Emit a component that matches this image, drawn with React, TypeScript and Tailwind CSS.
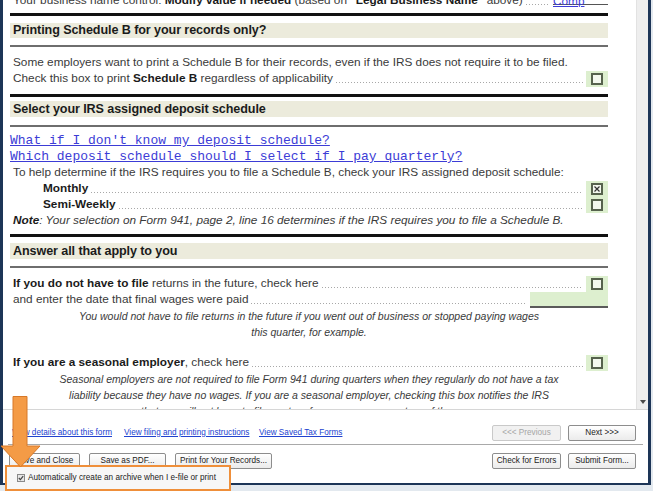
import React from 'react';

const dots = 'h-px flex-1 bg-[linear-gradient(to_right,#a8a8a8_1px,transparent_1px)] bg-[length:3px_1px]';

function Box({ checked }: { checked?: boolean }) {
  return (
    <span className="flex h-[12px] w-[12px] items-center justify-center border-2 border-[#56624d] bg-[#f3f8ee]">
      {checked && (
        <svg width="6" height="6" viewBox="0 0 6 6">
          <path d="M0.5 0.5 L5.5 5.5 M5.5 0.5 L0.5 5.5" stroke="#333" strokeWidth="1.2" />
        </svg>
      )}
    </span>
  );
}

function Cell({ checked }: { checked?: boolean }) {
  return (
    <div className="flex h-[16px] w-[22px] items-center justify-center bg-[#ddefcf]">
      <Box checked={checked} />
    </div>
  );
}

function LeaderRow({ children, right, indent }: { children: React.ReactNode; right: React.ReactNode; indent?: boolean }) {
  return (
    <div className="flex h-[16px] items-center">
      <span className={`whitespace-nowrap ${indent ? 'pl-[33px]' : 'pl-[3px]'}`}>{children}</span>
      <span className={`mx-[3px] mt-[7px] ${dots}`} />
      {right}
    </div>
  );
}

function Header({ title }: { title: string }) {
  return (
    <div className="flex h-full items-center bg-[#ecebdc] pl-[3px] text-[12.6px] font-bold tracking-[-0.1px] text-[#1b1b1b]">
      {title}
    </div>
  );
}

function Btn({ label, w, disabled }: { label: string; w: string; disabled?: boolean }) {
  return (
    <button
      className={`flex h-[16px] items-center justify-center whitespace-nowrap rounded-[2px] border text-[8.2px] ${w} ${
        disabled
          ? 'border-[#c9c9c9] bg-[#f1f1f1] text-[#a6a6a6]'
          : 'border-[#8d8d8d] bg-gradient-to-b from-white to-[#ebebeb] text-[#222]'
      }`}
    >
      {label}
    </button>
  );
}

export default function App() {
  return (
    <div className="relative h-[491px] w-[653px] overflow-hidden bg-[#e3e9ef] font-['Liberation_Sans',Arial,sans-serif]">
      <div className="flex h-[485px] w-[651px] flex-col border-x-[3px] border-b-[2px] border-[#1d3557] bg-white">
        {/* Scrolling form pane */}
        <div className="flex h-[410px] border-b border-[#d6d6d6]">
          <div className="flex-1 overflow-hidden pl-[7px] pr-[28px] text-[11.8px] text-[#3a3a3a]">
            <div className="h-[13px] overflow-hidden">
              <div className="-mt-[7px] flex h-[16px] items-center">
                <span className="whitespace-nowrap pl-[3px]">
                  Your business name control: <b className="text-[#1b1b1b]">Modify value if needed</b> (based on{' '}
                  <b className="text-[#1b1b1b]">"Legal Business Name"</b> above)
                </span>
                <span className={`mx-[3px] mt-[7px] ${dots}`} />
                <span className="h-[12px] w-[55px] self-start border-b border-[#555]">
                  <span className="text-[#3c3cd6] underline">Comp</span>
                </span>
              </div>
            </div>
            <div className="h-[3px] bg-[#111]" />
            <div className="mt-[7px] h-[15px]">
              <Header title="Printing Schedule B for your records only?" />
            </div>
            <div className="mt-[7px] h-[2px] bg-[#6e6e6e]" />

            <div className="mt-[8px] flex h-[16px] items-center whitespace-nowrap pl-[3px]">
              Some employers want to print a Schedule B for their records, even if the IRS does not require it to be filed.
            </div>
            <LeaderRow right={<Cell />}>
              Check this box to print <b className="text-[#1b1b1b]">Schedule B</b> regardless of applicability
            </LeaderRow>
            <div className="mt-[7px] h-[3px] bg-[#111]" />
            <div className="mt-[4px] h-[16px]">
              <Header title="Select your IRS assigned deposit schedule" />
            </div>
            <div className="mt-[8px] h-[2px] bg-[#6e6e6e]" />

            <div className="mt-[6px] font-['Liberation_Mono','Courier_New',monospace] text-[13px] leading-[16px] text-[#3c3cd6]">
              <div className="underline">What if I don't know my deposit schedule?</div>
              <div className="underline">Which deposit schedule should I select if I pay quarterly?</div>
            </div>
            <div className="flex h-[16px] items-center whitespace-nowrap pl-[3px]">
              To help determine if the IRS requires you to file a Schedule B, check your IRS assigned deposit schedule:
            </div>
            <LeaderRow indent right={<Cell checked />}>
              <b className="text-[#1b1b1b]">Monthly</b>
            </LeaderRow>
            <LeaderRow indent right={<Cell />}>
              <b className="text-[#1b1b1b]">Semi-Weekly</b>
            </LeaderRow>
            <div className="flex h-[16px] items-center whitespace-nowrap pl-[3px] italic">
              <b className="text-[#1b1b1b]">Note</b>: Your selection on Form 941, page 2, line 16 determines if the IRS requires you to file a Schedule B.
            </div>
            <div className="mt-[5px] h-[3px] bg-[#111]" />
            <div className="mt-[6px] h-[16px]">
              <Header title="Answer all that apply to you" />
            </div>
            <div className="mt-[7px] h-[2px] bg-[#6e6e6e]" />

            <div className="mt-[8px]">
              <LeaderRow right={<Cell />}>
                <b className="text-[#1b1b1b]">If you do not have to file</b> returns in the future, check here
              </LeaderRow>
              <LeaderRow right={<div className="h-[16px] w-[78px] border-b-2 border-[#5a5a5a] bg-[#ddefcf]" />}>
                and enter the date that final wages were paid
              </LeaderRow>
              <div className="text-center text-[10.5px] italic leading-[16px]">
                <div>You would not have to file returns in the future if you went out of business or stopped paying wages</div>
                <div>this quarter, for example.</div>
              </div>
            </div>

            <div className="mt-[15px]">
              <LeaderRow right={<Cell />}>
                <b className="text-[#1b1b1b]">If you are a seasonal employer</b>, check here
              </LeaderRow>
              <div className="text-center text-[10.5px] italic leading-[16px]">
                <div>Seasonal employers are not required to file Form 941 during quarters when they regularly do not have a tax</div>
                <div>liability because they have no wages. If you are a seasonal employer, checking this box notifies the IRS</div>
                <div>that you will not have to file a return for one or more quarters of the year.</div>
              </div>
            </div>
          </div>
          {/* Scrollbar */}
          <div className="flex w-[12px] flex-col items-center justify-end border-l border-[#e2e2e2] bg-[#eeeeee] pb-[5px]">
            <svg width="6" height="4" viewBox="0 0 6 4">
              <path d="M0 0 H6 L3 4 Z" fill="#4a4a4a" />
            </svg>
          </div>
        </div>

        {/* Bottom action panel */}
        <div className="flex flex-1 flex-col pt-[15px] text-[8.2px]">
          <div className="flex h-[16px] items-center pl-[9px] pr-[12px]">
            <div className="flex gap-[10px] whitespace-nowrap text-[#2142cf] underline">
              <span className="w-[102px]">View details about this form</span>
              <span className="w-[125px]">View filing and printing instructions</span>
              <span>View Saved Tax Forms</span>
            </div>
            <div className="ml-auto flex gap-[7px]">
              <Btn label="<<<  Previous" w="w-[69px]" disabled />
              <Btn label="Next  >>>" w="w-[68px]" />
            </div>
          </div>
          <div className="mx-[5px] mt-[3px] h-px bg-[#a9a9a9]" />
          <div className="mt-[8px] flex h-[16px] items-center pl-[6px] pr-[12px]">
            <div className="flex gap-[9px]">
              <Btn label="Save and Close" w="w-[71px]" />
              <Btn label="Save as PDF..." w="w-[77px]" />
              <Btn label="Print for Your Records..." w="w-[97px]" />
            </div>
            <div className="ml-auto flex gap-[7px]">
              <Btn label="Check for Errors" w="w-[69px]" />
              <Btn label="Submit Form..." w="w-[68px]" />
            </div>
          </div>
        </div>
      </div>

      {/* Annotation: highlighted archive option */}
      <div className="absolute left-[5px] top-[465px] flex h-[26px] w-[226px] items-center gap-[3px] border-2 border-[#ef8f3a] bg-[#f7f7f7] pl-[10px] text-[8.2px] text-[#222]">
        <span className="flex h-[8px] w-[8px] items-center justify-center border border-[#8a8a8a] bg-[#e6e6e6]">
          <svg width="6" height="6" viewBox="0 0 6 6">
            <path d="M0.8 3 L2.4 4.6 L5.2 1.2" stroke="#444" strokeWidth="1.2" fill="none" />
          </svg>
        </span>
        <span className="whitespace-nowrap">Automatically create an archive when I e-file or print</span>
      </div>

      {/* Annotation: arrow */}
      <svg className="absolute left-0 top-[396px]" width="41" height="72" viewBox="0 0 41 72">
        <path d="M13 0.5 H27 V50 H40 L20.5 71 L1 50 H13 Z" fill="#f49b46" stroke="#d77828" strokeWidth="1" />
      </svg>
    </div>
  );
}
